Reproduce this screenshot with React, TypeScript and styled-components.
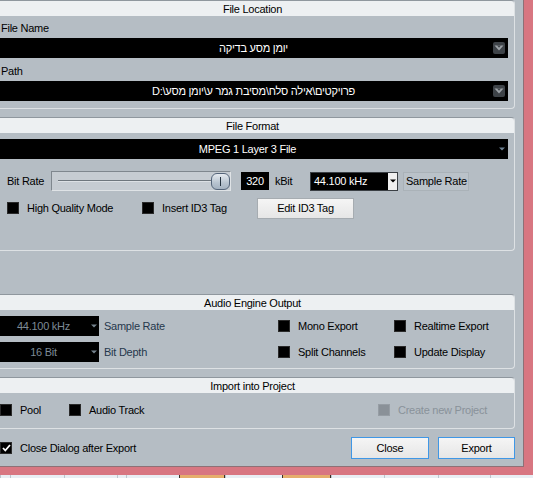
import React from 'react';
import styled, { createGlobalStyle } from 'styled-components';

const GlobalStyle = createGlobalStyle`
  html, body {
    margin: 0;
    padding: 0;
    background: #e9eef3;
    overflow: hidden;
  }
  body {
    font-family: "Liberation Sans", Arial, "DejaVu Sans", sans-serif;
    font-size: 11px;
    letter-spacing: -0.25px;
    color: #000;
  }
`;

const Screen = styled.div`
  width: 533px;
  height: 478px;
  overflow: hidden;
  display: flex;
  flex-direction: column;
`;

/* window frame: the screenshot crops ~10px of the dialog on the left */
const Frame = styled.div`
  flex-shrink: 0;
  margin-left: -10px;
  width: 543px;
  height: 475px;
  box-sizing: border-box;
  padding: 0 9px 8px 0;
  background: #d87681;
`;

const Dialog = styled.div`
  height: 100%;
  box-sizing: border-box;
  padding-right: 8px;
  background: #b5bdc4;
  border-right: 1px solid #8e7076;
  border-bottom: 1px solid #8e7076;
  display: flex;
  flex-direction: column;
`;

const Panel = styled.section<{ $top?: number }>`
  margin-top: ${p => p.$top ?? 0}px;
  border: 1px solid;
  border-color: #8f979e #dde1e4 #dde1e4 #8f979e;
  border-radius: 4px;
  overflow: hidden;
`;

const Title = styled.header`
  height: 15px;
  line-height: 16px;
  background: #edf0f2;
  text-align: center;
`;

/* ---------- File Location ---------- */

const LocationBody = styled.div`
  display: flex;
  flex-direction: column;
  padding: 5px 6px 7px 8px;
`;

const FieldLabel = styled.div<{ $first?: boolean }>`
  margin: ${p => (p.$first ? 0 : 6)}px 0 3px 2px;
  line-height: 14px;
`;

const Combo = styled.div`
  height: 20px;
  background: #000;
  color: #fff;
  display: flex;
  align-items: center;
`;

const ComboText = styled.span<{ $lead?: number }>`
  flex: 1;
  padding-left: ${p => p.$lead ?? 0}px;
  text-align: center;
  white-space: nowrap;
`;

const ArrowBtn = styled.span`
  width: 12px;
  height: 12px;
  margin-right: 3px;
  border-radius: 2px;
  background: #3e4348;
  display: flex;
  align-items: center;
  justify-content: center;
`;

const MiniArrow = styled.span<{ $w: number; $color: string }>`
  width: ${p => p.$w}px;
  display: flex;
  align-items: center;
  justify-content: center;
  color: ${p => p.$color};
`;

const Tri = () => (
  <svg width="6" height="4" viewBox="0 0 6 4">
    <path d="M0 0.5 H6 L3 3.5 Z" fill="currentColor" />
  </svg>
);

const Chevron = () => (
  <svg width="10" height="8" viewBox="0 0 10 8">
    <path d="M0.5 1.5 H9.5 L5 6.5 Z" fill="#9da3a8" />
    <path d="M3 1.5 H7 L5 3.8 Z" fill="#3e4348" />
  </svg>
);

/* ---------- File Format ---------- */

const FormatBody = styled.div`
  display: flex;
  flex-direction: column;
  padding: 6px 6px 32px 8px;
`;

const Row = styled.div<{ $top: number }>`
  margin-top: ${p => p.$top}px;
  height: 20px;
  padding-left: 8px;
  display: flex;
  align-items: center;
`;

const Cell = styled.span<{ $w: number }>`
  width: ${p => p.$w}px;
  flex-shrink: 0;
  display: flex;
  align-items: center;
  white-space: nowrap;
`;

const Track = styled.div`
  width: 180px;
  height: 20px;
  box-sizing: border-box;
  border: 1px solid;
  border-color: #7f878e #dfe3e6 #dfe3e6 #7f878e;
  background: #c6ccd2;
  display: flex;
  align-items: center;
  padding: 0 0 0 6px;
`;

const TrackLine = styled.span`
  flex: 1;
  height: 1px;
  background: #6f777e;
  border-bottom: 1px solid #dde1e5;
`;

const Knob = styled.span`
  width: 19px;
  height: 17px;
  box-sizing: border-box;
  border: 1px solid #55657a;
  border-radius: 6px;
  background: linear-gradient(#e6ebf0, #b7c3cf 60%, #a4b2c0);
  display: flex;
  align-items: center;
  justify-content: center;
  &::before {
    content: '';
    width: 1px;
    height: 9px;
    background: #24323f;
  }
`;

const ValueBox = styled.span`
  margin-left: 10px;
  width: 28px;
  height: 18px;
  background: #000;
  color: #fff;
  display: flex;
  align-items: center;
  justify-content: center;
`;

const Unit = styled.span`
  margin-left: 6px;
  width: 35px;
`;

const Select = styled.span`
  width: 88px;
  height: 19px;
  box-sizing: border-box;
  border: 1px solid #3a3f44;
  background: #000;
  color: #fff;
  display: flex;
  align-items: stretch;
`;

const SelectText = styled.span`
  flex: 1;
  padding-left: 3px;
  display: flex;
  align-items: center;
`;

const SelectBtn = styled.span`
  width: 9px;
  background: #f0f0f0;
  color: #000;
  display: flex;
  align-items: center;
  justify-content: center;
`;

const SideLabel = styled.span`
  margin-left: 5px;
  width: 66px;
  height: 19px;
  box-sizing: border-box;
  border: 1px solid #aab2b8;
  background: #bac2c9;
  padding-left: 2px;
  display: flex;
  align-items: center;
  white-space: nowrap;
`;

const Button = styled.button<{ $focus?: boolean; $w: number }>`
  width: ${p => p.$w}px;
  height: ${p => (p.$focus ? 22 : 21)}px;
  box-sizing: border-box;
  padding: 0;
  border: 1px solid ${p => (p.$focus ? '#3f97e6' : '#a6acb1')};
  background: linear-gradient(#f5f5f5, #e6e6e6);
  font: inherit;
  letter-spacing: inherit;
  color: #000;
`;

/* ---------- check boxes ---------- */

const Check = styled.span<{ $w?: number; $disabled?: boolean }>`
  width: ${p => (p.$w ? `${p.$w}px` : 'auto')};
  flex-shrink: 0;
  display: flex;
  align-items: center;
  gap: 8px;
  white-space: nowrap;
  color: ${p => (p.$disabled ? '#89929a' : '#000')};
`;

const Box = styled.span<{ $disabled?: boolean }>`
  width: 12px;
  height: 12px;
  box-sizing: border-box;
  background: ${p => (p.$disabled ? '#8a9198' : '#000')};
  border: 1px solid ${p => (p.$disabled ? '#969da4' : '#2a2a2a')};
  display: flex;
  align-items: center;
  justify-content: center;
`;

function CheckItem({ label, w, checked, disabled }: { label: string; w?: number; checked?: boolean; disabled?: boolean }) {
  return (
    <Check $w={w} $disabled={disabled}>
      <Box $disabled={disabled}>
        {checked && (
          <svg width="9" height="8" viewBox="0 0 9 8">
            <path d="M1 4 L3.3 6.5 L8 1" stroke="#fff" strokeWidth="1.8" fill="none" />
          </svg>
        )}
      </Box>
      {label}
    </Check>
  );
}

/* ---------- Audio Engine Output ---------- */

const EngineBody = styled.div`
  display: grid;
  grid-template-columns: 100px 179px 116px 1fr;
  grid-auto-rows: 20px;
  row-gap: 6px;
  align-items: center;
  padding: 6px 6px 6px 8px;
`;

const DimCombo = styled.span`
  height: 20px;
  background: #000;
  color: #7d8a96;
  display: flex;
  align-items: center;
`;

const SlateLabel = styled.span`
  padding-left: 5px;
  color: #25384c;
`;

/* ---------- Import into Project ---------- */

const ImportBody = styled.div`
  height: 20px;
  padding: 7px 6px 8px 9px;
  display: flex;
  align-items: center;
`;

const Footer = styled.div`
  flex: 1;
  padding: 8px 0 0 10px;
  display: flex;
  align-items: flex-start;
`;

const FooterCheck = styled.div`
  height: 22px;
  display: flex;
  align-items: center;
`;

const Actions = styled.div`
  margin-left: auto;
  display: flex;
  gap: 9px;
`;

/* ---------- arrange window strip below the dialog ---------- */

const Strip = styled.div`
  flex: 1;
  display: flex;
  background: #e9eef3;
`;

const StripCell = styled.span<{ $w: number; $clip?: boolean }>`
  width: ${p => p.$w}px;
  flex-shrink: 0;
  box-sizing: border-box;
  border-left: 1px solid ${p => (p.$clip ? '#3b3128' : '#bcc5cd')};
  border-right: ${p => (p.$clip ? '1px solid #3b3128' : 'none')};
  background: ${p => (p.$clip ? '#e6ae6c' : 'transparent')};
`;

const stripCells = [
  { w: 10 }, { w: 54 }, { w: 53 }, { w: 9 }, { w: 53 },
  { w: 46, clip: true }, { w: 57 }, { w: 49, clip: true },
  { w: 53 }, { w: 54 }, { w: 52 }, { w: 43 },
];

export default function App() {
  return (
    <>
      <GlobalStyle />
      <Screen>
        <Frame>
          <Dialog>
            <Panel>
              <Title>File Location</Title>
              <LocationBody>
                <FieldLabel $first>File Name</FieldLabel>
                <Combo>
                  <ComboText $lead={15}>יומן מסע בדיקה</ComboText>
                  <ArrowBtn><Chevron /></ArrowBtn>
                </Combo>
                <FieldLabel>Path</FieldLabel>
                <Combo>
                  <ComboText $lead={15}>{'D:\\פרויקטים\\אילה סלח\\מסיבת גמר ע\\יומן מסע'}</ComboText>
                  <ArrowBtn><Chevron /></ArrowBtn>
                </Combo>
              </LocationBody>
            </Panel>

            <Panel $top={8}>
              <Title>File Format</Title>
              <FormatBody>
                <Combo>
                  <ComboText>MPEG 1 Layer 3 File</ComboText>
                  <MiniArrow $w={12} $color="#6d8193"><Tri /></MiniArrow>
                </Combo>
                <Row $top={12}>
                  <Cell $w={44}>Bit Rate</Cell>
                  <Track>
                    <TrackLine />
                    <Knob />
                  </Track>
                  <ValueBox>320</ValueBox>
                  <Unit>kBit</Unit>
                  <Select>
                    <SelectText>44.100 kHz</SelectText>
                    <SelectBtn><Tri /></SelectBtn>
                  </Select>
                  <SideLabel>Sample Rate</SideLabel>
                </Row>
                <Row $top={7}>
                  <CheckItem w={135} label="High Quality Mode" />
                  <CheckItem w={115} label="Insert ID3 Tag" />
                  <Button $w={97}>Edit ID3 Tag</Button>
                </Row>
              </FormatBody>
            </Panel>

            <Panel $top={43}>
              <Title>Audio Engine Output</Title>
              <EngineBody>
                <DimCombo>
                  <ComboText>44.100 kHz</ComboText>
                  <MiniArrow $w={11} $color="#76848f"><Tri /></MiniArrow>
                </DimCombo>
                <SlateLabel>Sample Rate</SlateLabel>
                <CheckItem label="Mono Export" />
                <CheckItem label="Realtime Export" />
                <DimCombo>
                  <ComboText>16 Bit</ComboText>
                  <MiniArrow $w={11} $color="#76848f"><Tri /></MiniArrow>
                </DimCombo>
                <SlateLabel>Bit Depth</SlateLabel>
                <CheckItem label="Split Channels" />
                <CheckItem label="Update Display" />
              </EngineBody>
            </Panel>

            <Panel $top={8}>
              <Title>Import into Project</Title>
              <ImportBody>
                <CheckItem w={69} label="Pool" />
                <CheckItem w={309} label="Audio Track" />
                <CheckItem label="Create new Project" disabled />
              </ImportBody>
            </Panel>

            <Footer>
              <FooterCheck>
                <CheckItem label="Close Dialog after Export" checked />
              </FooterCheck>
              <Actions>
                <Button $focus $w={78}>Close</Button>
                <Button $focus $w={77}>Export</Button>
              </Actions>
            </Footer>
          </Dialog>
        </Frame>
        <Strip>
          {stripCells.map((c, i) => (
            <StripCell key={i} $w={c.w} $clip={c.clip} />
          ))}
        </Strip>
      </Screen>
    </>
  );
}
